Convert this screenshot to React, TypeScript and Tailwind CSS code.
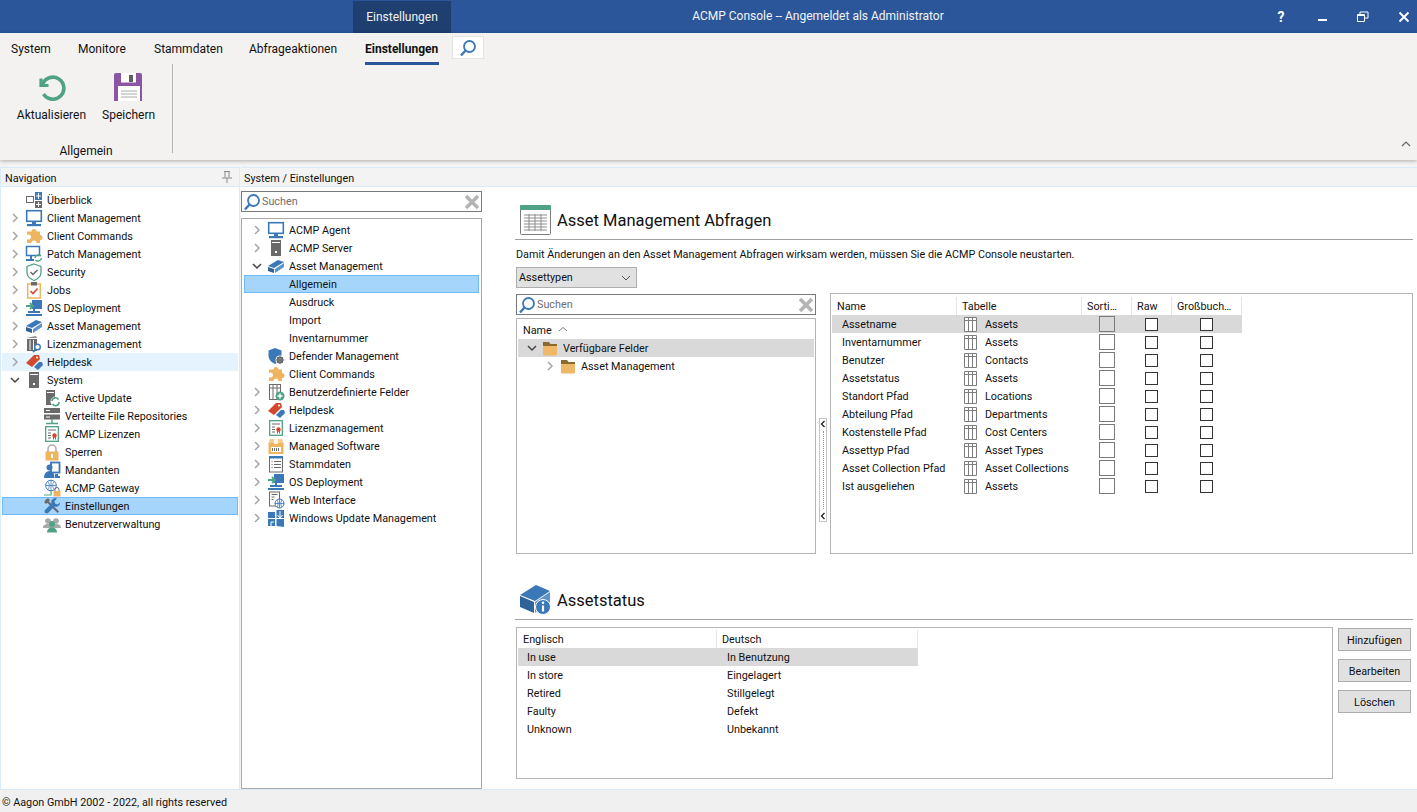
import type { ReactNode } from "react";

const BLUE = "#3b78b8";
const ORANGE = "#eeb45f";
const GREEN = "#4fa384";
const RED = "#d14a2e";
const GRAY = "#6a6a6a";

function Svg({ size = 18, children }: { size?: number; children: ReactNode }) {
  return (
    <svg width={size} height={size} viewBox="0 0 18 18" className="shrink-0">
      {children}
    </svg>
  );
}

const ICONS: Record<string, ReactNode> = {
  overview: (
    <>
      <rect x="1.500" y="5.500" width="7" height="6" fill="none" stroke={GRAY} />
      <rect x="10" y="1" width="7" height="8" fill={BLUE} />
      <rect x="10" y="10" width="7" height="7" fill={GRAY} />
      <path d="M11 5h5M13.500 2v6M11 13.500h5M13.500 11v5" stroke="#fff" />
    </>
  ),
  monitor: (
    <>
      <rect x="1.700" y="1.700" width="14.600" height="10.600" fill="#fff" stroke={BLUE} strokeWidth="1.600" />
      <rect x="7" y="13" width="4" height="2" fill={BLUE} />
      <rect x="2" y="15" width="14" height="2.200" fill={BLUE} />
    </>
  ),
  puzzle: (
    <path
      d="M6.500 4.500a2.500 2.500 0 1 1 5 0H15v3.500a2.500 2.500 0 1 1 0 5v3H11.500a2.500 2.500 0 1 0-5 0H2v-4a2.500 2.500 0 1 0 0-4V4.500z"
      fill={ORANGE}
    />
  ),
  monitorSync: (
    <>
      <rect x="1.500" y="1.500" width="13" height="9" fill="#fff" stroke={BLUE} strokeWidth="1.500" />
      <path d="M1 15h8M6 11v4" stroke={BLUE} strokeWidth="2" />
      <path d="M10 13a3.500 3.500 0 0 1 6-2M16.500 13a3.500 3.500 0 0 1-6 2" fill="none" stroke={GREEN} strokeWidth="1.500" />
    </>
  ),
  shield: (
    <>
      <path d="M9 1l7 2.500v6c0 4-3.500 6.500-7 8-3.500-1.500-7-4-7-8v-6z" fill="#fff" stroke={GREEN} strokeWidth="1.300" />
      <path d="M5.500 9l2.500 2.500 4.500-4.500" fill="none" stroke={GRAY} strokeWidth="1.500" />
    </>
  ),
  clipboard: (
    <>
      <rect x="2.700" y="3" width="12.600" height="14" fill="#fff" stroke={ORANGE} strokeWidth="1.500" />
      <rect x="6" y="1" width="6" height="3.500" fill={GRAY} />
      <path d="M5.500 10l2.500 2.500 4.500-5" fill="none" stroke={RED} strokeWidth="1.600" />
    </>
  ),
  deploy: (
    <>
      <rect x="7" y="1" width="10" height="9" fill={BLUE} />
      <rect x="3" y="12" width="12" height="2" fill={BLUE} />
      <path d="M9 10v3M1 16h16" stroke={BLUE} strokeWidth="2" />
      <path d="M1 7h6M5 4l3 3-3 3" fill="none" stroke={GREEN} strokeWidth="1.800" />
    </>
  ),
  box: (
    <>
      <path d="M1 9l10-6 6 2-10 6z" fill={BLUE} />
      <path d="M1 10l6 2v4l-6-2z" fill="#2f6299" />
      <path d="M8 12l9-6v4l-9 6z" fill="#5b93cb" />
    </>
  ),
  license: (
    <>
      <path d="M2 4h10v12H2z" fill={GRAY} />
      <path d="M1 3l10-2 1 2H1z" fill="#8a8a8a" />
      <path d="M5 5v10M8.500 5v10" stroke="#fff" />
      <circle cx="12.500" cy="12" r="2.800" fill="#fff" stroke={BLUE} strokeWidth="1.400" />
      <path d="M10.500 14.500l-2.500 2.500" stroke={BLUE} strokeWidth="1.800" />
    </>
  ),
  tag: (
    <>
      <path d="M1 10l8-8h5l1 4-8 8z" fill={RED} />
      <circle cx="12" cy="4.500" r="1" fill="#fff" />
      <path d="M9 14l5-5h3l1 3-5 5z" fill={BLUE} />
    </>
  ),
  server: (
    <>
      <rect x="4" y="1" width="10" height="16" fill={GRAY} />
      <path d="M5 3.500h8" stroke="#fff" />
      <rect x="8" y="12" width="2" height="2" fill="#fff" />
    </>
  ),
  serverSync: (
    <>
      <rect x="3" y="1" width="9" height="15" fill={GRAY} />
      <path d="M4 3.500h7" stroke="#fff" />
      <circle cx="12.500" cy="12.500" r="5" fill="#fff" />
      <path d="M9 12a3.500 3.500 0 0 1 6.500-1.500M16 13a3.500 3.500 0 0 1-6.500 2" fill="none" stroke={GREEN} strokeWidth="1.600" />
    </>
  ),
  repos: (
    <>
      <rect x="1" y="1" width="16" height="5" fill={GRAY} />
      <rect x="1" y="7.500" width="16" height="5" fill={GRAY} />
      <path d="M3 3.500h4M3 10h4" stroke="#fff" />
      <path d="M9 12v4M3 16.500h12" stroke={GREEN} strokeWidth="1.400" />
    </>
  ),
  cert: (
    <>
      <rect x="2.700" y="1.700" width="12.600" height="14.600" fill="#fff" stroke={GREEN} strokeWidth="1.300" />
      <path d="M5 5h8M5 8h3M5 10.500h3M5 13h3" stroke={GRAY} />
      <circle cx="11.500" cy="10.500" r="2.200" fill={RED} />
      <path d="M10.500 12v2.500M12.500 12v2.500" stroke={RED} />
    </>
  ),
  lock: (
    <>
      <path d="M5 9V6a4 4 0 0 1 8 0v3" fill="none" stroke="#a8a8a8" strokeWidth="1.500" />
      <rect x="2.500" y="8.500" width="13" height="9" fill={ORANGE} />
      <rect x="8" y="11" width="2" height="4" fill="#fff" />
    </>
  ),
  mandanten: (
    <>
      <rect x="8" y="1.500" width="8.500" height="10" fill="#fff" stroke={BLUE} strokeWidth="1.800" />
      <circle cx="6.500" cy="6.500" r="3" fill={BLUE} />
      <path d="M1 17c0-4 2-7 5.500-7s5 3 5 7z" fill={BLUE} />
      <path d="M12 13h3v2h2v2h-5z" fill={BLUE} />
    </>
  ),
  gateway: (
    <>
      <circle cx="8" cy="6.500" r="5.300" fill="#fff" stroke={BLUE} />
      <path d="M2.700 6.500h10.600M8 1.200v10.600M4.800 2.500c2 2.500 2 5.500 0 8M11.200 2.500c-2 2.500-2 5.500 0 8" fill="none" stroke={BLUE} strokeWidth=".8" />
      <path d="M8 12v4H1" stroke={GREEN} fill="none" strokeWidth="1.200" />
      <rect x="10.500" y="12" width="7" height="5.500" fill={ORANGE} />
      <path d="M12 12v-1.500a2 2 0 0 1 4 0V12" fill="none" stroke={GRAY} />
    </>
  ),
  tools: (
    <>
      <path d="M2 3.500L3.500 2 16 14.500 14.500 16z" fill={GRAY} />
      <path d="M1 5l4-4 2 2-4 4z" fill={GRAY} />
      <path d="M12.500 1a4 4 0 0 0-4 5.500L1.500 13.500 2 16l2.500.500L11.500 9.500a4 4 0 0 0 5.500-4l-2.500 2-2.500-1-.5-2.500 2.500-2.500z" fill={BLUE} />
    </>
  ),
  users: (
    <>
      <circle cx="5" cy="6" r="2.800" fill="#a8a8a8" />
      <circle cx="13" cy="6" r="2.800" fill="#a8a8a8" />
      <path d="M0 13c0-3 2-4 5-4s5 1 5 4zM8 13c0-3 2-4 5-4s5 1 5 4z" fill="#a8a8a8" />
      <circle cx="9" cy="9" r="3" fill={GREEN} />
      <path d="M4 17.500c0-3 2-5 5-5s5 2 5 5z" fill={GREEN} />
    </>
  ),
  defender: (
    <>
      <path d="M8 1l6.500 2.500v5c0 4-3 7-6.500 8.500-3.500-1.500-6.500-4.500-6.500-8.500v-5z" fill={BLUE} />
      <circle cx="13" cy="13" r="4.500" fill="#fff" />
      <circle cx="13" cy="13" r="2.400" fill="none" stroke={GRAY} strokeWidth="2" />
      <path d="M13 8.800v8.400M8.800 13h8.400M10 10l6 6M16 10l-6 6" stroke={GRAY} strokeWidth=".9" />
    </>
  ),
  tableAdd: (
    <>
      <rect x="2.500" y="1.500" width="11" height="15" fill="#fff" stroke={GRAY} />
      <path d="M2.500 5h11M6 1.500v15M10 1.500v15" stroke={GRAY} />
      <circle cx="13" cy="13" r="4.500" fill={GREEN} />
      <path d="M10.500 13h5M13 10.500v5" stroke="#fff" strokeWidth="1.500" />
    </>
  ),
  pack: (
    <>
      <path d="M1.500 6h15v11h-15z" fill={ORANGE} />
      <path d="M3 2h12l1.500 4h-15z" fill="#f4cd92" />
      <rect x="7" y="2" width="4" height="5" fill="#fff3df" />
      <rect x="4" y="10" width="10" height="5" fill="#fff" />
      <path d="M5.500 11v3M7.500 11v3M9.500 11v3M11.500 11v3" stroke={GRAY} />
    </>
  ),
  list: (
    <>
      <rect x="2.500" y="1.500" width="13" height="15.500" fill="#fff" stroke={GRAY} />
      <rect x="2" y="1" width="14" height="2.500" fill={BLUE} />
      <path d="M4.500 6.500h1M7 6.500h7M4.500 9.500h1M7 9.500h7M4.500 12.500h1M7 12.500h7" stroke={GRAY} />
    </>
  ),
  web: (
    <>
      <rect x="2.500" y="1" width="10" height="14" fill="#fff" stroke={GRAY} />
      <path d="M4.500 3.500h6M4.500 6h3M4.500 8.500h2" stroke={GRAY} />
      <circle cx="12.500" cy="12.500" r="4.500" fill="#fff" stroke={BLUE} />
      <path d="M8 12.500h9M12.500 8v9M10 9c1.500 2 1.500 5 0 7M15 9c-1.500 2-1.500 5 0 7" fill="none" stroke={BLUE} strokeWidth=".8" />
    </>
  ),
  windows: (
    <>
      <rect x="1" y="3" width="7" height="6" fill={BLUE} />
      <rect x="9.500" y="1" width="7.500" height="8" fill={BLUE} />
      <path d="M1 10h7v7H1z" fill={BLUE} />
      <path d="M9.500 10H17v8l-7.500-1z" fill={BLUE} />
      <path d="M13 2v6M10.500 6l2.500 3 2.500-3M4 17v-4h3" stroke="#fff" fill="none" />
    </>
  ),
};

function Chevron({ state }: { state?: "open" | "closed" }) {
  if (!state) return <span className="w-[23px] shrink-0" />;
  return (
    <span className="w-[23px] shrink-0 pl-[8px]">
      <svg width="10" height="10" viewBox="0 0 10 10" className="block">
        {state === "open" ? (
          <path d="M1 3l4 4 4-4" fill="none" stroke="#444" strokeWidth="1.500" />
        ) : (
          <path d="M3 1l4 4-4 4" fill="none" stroke="#a6a6a6" strokeWidth="1.500" />
        )}
      </svg>
    </span>
  );
}

type Node = {
  label: string;
  icon?: string;
  state?: "open" | "closed";
  child?: boolean;
  selected?: boolean;
  hover?: boolean;
};

const NAV: Node[] = [
  { label: "Überblick", icon: "overview" },
  { label: "Client Management", icon: "monitor", state: "closed" },
  { label: "Client Commands", icon: "puzzle", state: "closed" },
  { label: "Patch Management", icon: "monitorSync", state: "closed" },
  { label: "Security", icon: "shield", state: "closed" },
  { label: "Jobs", icon: "clipboard", state: "closed" },
  { label: "OS Deployment", icon: "deploy", state: "closed" },
  { label: "Asset Management", icon: "box", state: "closed" },
  { label: "Lizenzmanagement", icon: "license", state: "closed" },
  { label: "Helpdesk", icon: "tag", state: "closed", hover: true },
  { label: "System", icon: "server", state: "open" },
  { label: "Active Update", icon: "serverSync", child: true },
  { label: "Verteilte File Repositories", icon: "repos", child: true },
  { label: "ACMP Lizenzen", icon: "cert", child: true },
  { label: "Sperren", icon: "lock", child: true },
  { label: "Mandanten", icon: "mandanten", child: true },
  { label: "ACMP Gateway", icon: "gateway", child: true },
  { label: "Einstellungen", icon: "tools", child: true, selected: true },
  { label: "Benutzerverwaltung", icon: "users", child: true },
];

const SETTINGS: Node[] = [
  { label: "ACMP Agent", icon: "monitor", state: "closed" },
  { label: "ACMP Server", icon: "server", state: "closed" },
  { label: "Asset Management", icon: "box", state: "open" },
  { label: "Allgemein", child: true, selected: true },
  { label: "Ausdruck", child: true },
  { label: "Import", child: true },
  { label: "Inventarnummer", child: true },
  { label: "Defender Management", icon: "defender" },
  { label: "Client Commands", icon: "puzzle" },
  { label: "Benutzerdefinierte Felder", icon: "tableAdd", state: "closed" },
  { label: "Helpdesk", icon: "tag", state: "closed" },
  { label: "Lizenzmanagement", icon: "cert", state: "closed" },
  { label: "Managed Software", icon: "pack", state: "closed" },
  { label: "Stammdaten", icon: "list", state: "closed" },
  { label: "OS Deployment", icon: "deploy", state: "closed" },
  { label: "Web Interface", icon: "web", state: "closed" },
  { label: "Windows Update Management", icon: "windows", state: "closed" },
];

function TreeRow({ node }: { node: Node }) {
  const bg = node.selected
    ? "bg-[#a6d5fb] outline outline-1 -outline-offset-1 outline-[#6fbaf7]"
    : node.hover
      ? "bg-[#e5f3ff]"
      : "";
  return (
    <div className={`flex h-[18px] items-center ${bg}`}>
      {node.child ? <span className={node.icon ? "w-[41px] shrink-0" : "w-[45px] shrink-0"} /> : <Chevron state={node.state} />}
      {node.icon && <Svg>{ICONS[node.icon]}</Svg>}
      {node.icon && <span className="w-[4px] shrink-0" />}
      <span className="whitespace-nowrap pt-[2px] leading-[16px]">{node.label}</span>
    </div>
  );
}

function SearchIcon({ size = 18 }: { size?: number }) {
  return (
    <Svg size={size}>
      <circle cx="10.500" cy="7.500" r="5.500" fill="#fff" stroke={BLUE} strokeWidth="1.800" />
      <path d="M6.500 11.500L2 16.500" stroke={BLUE} strokeWidth="2.400" />
    </Svg>
  );
}

function SearchBox({ className }: { className: string }) {
  return (
    <div className={`flex h-[21px] items-center border border-[#7a7a7a] bg-white pl-[1px] pr-[1px] ${className}`}>
      <SearchIcon />
      <span className="ml-[1px] flex-1 text-[#6d6d6d]">Suchen</span>
      <svg width="16" height="16" viewBox="0 0 16 16" className="shrink-0">
        <path d="M2 2l12 12M14 2L2 14" stroke="#b4b4b4" strokeWidth="3.600" />
      </svg>
    </div>
  );
}

function ColIcon() {
  return (
    <svg width="14" height="15" viewBox="0 0 14 15" className="shrink-0">
      <path d="M.5.500h12v14H.5zM.5 3.500h12M4.500.500v14M8.500.500v14" fill="#fff" stroke="#7d7d7d" />
    </svg>
  );
}

const FIELDS = [
  ["Assetname", "Assets"],
  ["Inventarnummer", "Assets"],
  ["Benutzer", "Contacts"],
  ["Assetstatus", "Assets"],
  ["Standort Pfad", "Locations"],
  ["Abteilung Pfad", "Departments"],
  ["Kostenstelle Pfad", "Cost Centers"],
  ["Assettyp Pfad", "Asset Types"],
  ["Asset Collection Pfad", "Asset Collections"],
  ["Ist ausgeliehen", "Assets"],
];

const STATUS = [
  ["In use", "In Benutzung"],
  ["In store", "Eingelagert"],
  ["Retired", "Stillgelegt"],
  ["Faulty", "Defekt"],
  ["Unknown", "Unbekannt"],
];

function Folder() {
  return (
    <svg width="16" height="15" viewBox="0 0 16 15" className="shrink-0">
      <path d="M1 1h6l1.500 2H15v2H1z" fill="#8a6a2f" />
      <rect x="1" y="5" width="14" height="9.500" rx="1" fill="#eeb866" />
    </svg>
  );
}

function HeaderCell({ className, children }: { className: string; children: ReactNode }) {
  return <div className={`h-[18px] whitespace-nowrap border-r border-[#e5e5e5] pl-[5px] pt-[2px] leading-[16px] ${className}`}>{children}</div>;
}

function Heading({ icon, title }: { icon: ReactNode; title: string }) {
  return (
    <div className="flex h-[38px] items-center border-b border-[#a0a0a0] pb-[2px]">
      <span className="flex w-[42px] justify-start pl-[5px]">{icon}</span>
      <span className="pt-[2px] text-[16.500px] text-[#111]">{title}</span>
    </div>
  );
}

function Btn({ label }: { label: string }) {
  return (
    <div className="flex h-[23px] w-[73px] items-center justify-center border border-[#adadad] bg-[#e1e1e1] pt-[2px]">{label}</div>
  );
}

export default function App() {
  return (
    <div className="flex h-[812px] w-[1417px] flex-col overflow-hidden bg-white text-[10.800px] leading-[18px] text-[#111] font-['Roboto',sans-serif]">
      {/* title bar */}
      <div className="flex h-[33px] shrink-0 items-end bg-[#2b579a] pl-[353px] text-[12px] text-white">
        <div className="flex h-[32px] w-[98px] items-center justify-center bg-[#1e3f6f] text-[#f1f1f1]">Einstellungen</div>
        <div className="flex h-full flex-1 items-center justify-center pb-[1px] text-[#f3f3f3]">{"ACMP Console -\u200c- Angemeldet als Administrator"}</div>
        <div className="flex h-full w-[232px] items-center">
          <span className="ml-[89px] w-[14px] text-center text-[14px] font-bold">?</span>
          <svg width="12" height="12" viewBox="0 0 12 12" className="ml-[28px]">
            <path d="M2 9h9" stroke="#fff" strokeWidth="2" />
          </svg>
          <svg width="12" height="12" viewBox="0 0 12 12" className="ml-[29px]">
            <path d="M.500 3.500h7v7h-7zM.500 4.500h7M3 3V1h8v6H8" fill="none" stroke="#fff" />
          </svg>
          <svg width="12" height="12" viewBox="0 0 12 12" className="ml-[29px]">
            <path d="M1.500 1.500l9 9M10.500 1.500l-9 9" stroke="#fff" strokeWidth="1.800" />
          </svg>
        </div>
      </div>

      {/* ribbon */}
      <div className="relative z-10 h-[127px] shrink-0 bg-[#f3f2f1] text-[12px] shadow-[0_1px_4px_rgba(0,0,0,0.3)]">
        <div className="flex h-[31px] items-start pt-[3px]">
          <span className="ml-[11px] mt-[4px] w-[38px]">System</span>
          <span className="ml-[29px] mt-[4px] w-[49px]">Monitore</span>
          <span className="ml-[27px] mt-[4px] w-[68px]">Stammdaten</span>
          <span className="ml-[27px] mt-[4px] w-[88px]">Abfrageaktionen</span>
          <span className="ml-[28px] mt-[4px] h-[25px] w-[74px] whitespace-nowrap border-b-[3px] border-[#2b579a] font-bold">Einstellungen</span>
          <span className="ml-[13px] flex h-[23px] w-[32px] items-center justify-center border border-[#e3e3e3] bg-white">
            <SearchIcon size={18} />
          </span>
        </div>
        <div className="flex h-[89px] items-stretch">
          <div className="flex w-[172px] flex-col items-center">
            <div className="flex flex-1 items-start gap-[16px] pt-[8px]">
              <div className="flex flex-col items-center">
                <svg width="30" height="30" viewBox="0 0 30 30">
                  <path d="M5 6.500v7h7.500" fill="none" stroke="#4fa384" strokeWidth="3.200" />
                  <path d="M6.500 12.500a11 11 0 1 1 1 9.500" fill="none" stroke="#4fa384" strokeWidth="3.600" />
                </svg>
                <span className="mt-[4px]">Aktualisieren</span>
              </div>
              <div className="flex flex-col items-center">
                <svg width="30" height="30" viewBox="0 0 30 30" className="-translate-x-[1px]">
                  <path d="M1 3a2 2 0 0 1 2-2h24a2 2 0 0 1 2 2v26H1z" fill="#8c55a3" />
                  <rect x="8" y="1" width="15" height="9.500" fill="#fff" />
                  <rect x="16" y="3" width="4" height="7" fill="#5e5e5e" />
                  <rect x="5" y="14" width="22" height="15" fill="#fff" />
                  <path d="M8 19h16M8 22h16M8 25h16" stroke="#aaa" />
                </svg>
                <span className="mt-[4px]">Speichern</span>
              </div>
            </div>
            <span className="mb-[-7px]">Allgemein</span>
          </div>
          <div className="w-[1px] bg-[#b5b5b5]" />
          <div className="flex flex-1 items-end justify-end pb-[5px] pr-[6px]">
            <svg width="10" height="8" viewBox="0 0 10 8">
              <path d="M1 6l4-4 4 4" fill="none" stroke="#666" strokeWidth="1.200" />
            </svg>
          </div>
        </div>
      </div>

      {/* body */}
      <div className="flex min-h-0 flex-1 gap-[1px] bg-[#f4f4f4] pt-[7px]">
        {/* navigation */}
        <div className="flex w-[240px] shrink-0 flex-col bg-white">
          <div className="flex h-[20px] shrink-0 items-center justify-between border border-[#d9ebf9] bg-[#f3f3f3] pl-[4px] pr-[6px]">
            <span className="pt-[4px] leading-[16px]">Navigation</span>
            <svg width="12" height="14" viewBox="0 0 12 14">
              <path d="M3 1.500h6M4 1.500v6M8 1.500v6M1 8h10M6 8v5" fill="none" stroke="#8a8a8a" />
            </svg>
          </div>
          <div className="flex-1 border-x border-[#d9ebf9] pl-[1px] pr-[1px] pt-[4px]">
            {NAV.map((n) => (
              <TreeRow key={n.label} node={n} />
            ))}
          </div>
        </div>

        {/* content */}
        <div className="flex min-w-0 flex-1 flex-col bg-white">
          <div className="flex h-[20px] shrink-0 items-center border-y border-[#d9ebf9] bg-[#f3f3f3] pl-[3px] pt-[4px]">System / Einstellungen</div>
          <div className="flex min-h-0 flex-1">
            {/* settings tree */}
            <div className="flex w-[241px] shrink-0 flex-col pt-[4px]">
              <SearchBox className="shrink-0" />
              <div className="mt-[6px] flex-1 border border-[#a9a9a9] px-[2px] pt-[2px]">
                {SETTINGS.map((n) => (
                  <TreeRow key={n.label} node={n} />
                ))}
              </div>
            </div>

            {/* right side */}
            <div className="ml-[33px] flex w-[898px] shrink-0 flex-col pt-[15px]">
              <Heading
                title="Asset Management Abfragen"
                icon={
                  <svg width="31" height="30" viewBox="0 0 31 30">
                    <rect x=".500" y=".500" width="30" height="29" rx="1" fill="#fff" stroke="#7d7d7d" />
                    <rect x="0" y="0" width="31" height="5" rx="1" fill="#4fa384" />
                    <path d="M4 10h23M4 13h23M4 16h23M4 19h23M4 22h23M4 25h23M9 9v17M15 9v17M21 9v17" stroke="#8c8c8c" />
                  </svg>
                }
              />
              <div className="ml-[1px] mt-[6px]">Damit Änderungen an den Asset Management Abfragen wirksam werden, müssen Sie die ACMP Console neustarten.</div>
              <div className="ml-[1px] mt-[3px] flex h-[21px] w-[121px] items-center justify-between border border-[#adadad] bg-[#e1e1e1] pl-[2px] pr-[5px]">
                <span>Assettypen</span>
                <svg width="10" height="10" viewBox="0 0 10 10">
                  <path d="M1 3l4 4 4-4" fill="none" stroke="#555" />
                </svg>
              </div>

              <div className="mt-[5px] flex h-[261px]">
                <div className="ml-[1px] flex w-[300px] shrink-0 flex-col pt-[1px]">
                  <SearchBox className="shrink-0" />
                  <div className="mt-[3px] flex-1 border border-[#b5b5b5] px-[1px] pt-[2px]">
                    <div className="flex h-[18px] items-center pl-[5px]">
                      <span className="pt-[2px] leading-[16px]">Name</span>
                      <svg width="10" height="10" viewBox="0 0 10 10" className="ml-[6px]">
                        <path d="M1 6l4-3.500L9 6" fill="none" stroke="#777" />
                      </svg>
                    </div>
                    <div className="flex h-[18px] items-center bg-[#d9d9d9] pl-[9px]">
                      <svg width="10" height="10" viewBox="0 0 10 10" className="mr-[5px]">
                        <path d="M1 3l4 4 4-4" fill="none" stroke="#444" strokeWidth="1.500" />
                      </svg>
                      <Folder />
                      <span className="ml-[5px] pt-[2px] leading-[16px]">Verfügbare Felder</span>
                    </div>
                    <div className="flex h-[18px] items-center pl-[27px]">
                      <svg width="10" height="10" viewBox="0 0 10 10" className="mr-[5px]">
                        <path d="M3 1l4 4-4 4" fill="none" stroke="#a6a6a6" strokeWidth="1.500" />
                      </svg>
                      <Folder />
                      <span className="ml-[5px] pt-[2px] leading-[16px]">Asset Management</span>
                    </div>
                  </div>
                </div>

                <div className="ml-[3px] mt-[125px] flex h-[104px] w-[8px] shrink-0 flex-col justify-between border border-[#c4c4c4]">
                  <svg width="6" height="10" viewBox="0 0 6 10">
                    <path d="M4.500 2L1.500 5l3 3" fill="none" stroke="#222" strokeWidth="1.300" />
                  </svg>
                  <div className="mx-auto h-[78px] w-0 border-l border-dotted border-[#5aa0d8]" />
                  <svg width="6" height="10" viewBox="0 0 6 10">
                    <path d="M4.500 2L1.500 5l3 3" fill="none" stroke="#222" strokeWidth="1.300" />
                  </svg>
                </div>

                <div className="ml-[3px] flex-1 border border-[#b5b5b5] pl-[1px] pt-[3px]">
                  <div className="flex w-[410px]">
                    <HeaderCell className="w-[125px]">Name</HeaderCell>
                    <HeaderCell className="w-[125px]">Tabelle</HeaderCell>
                    <HeaderCell className="w-[50px]">Sorti…</HeaderCell>
                    <HeaderCell className="w-[40px]">Raw</HeaderCell>
                    <HeaderCell className="w-[70px]">Großbuch…</HeaderCell>
                  </div>
                  {FIELDS.map(([name, table], i) => (
                    <div key={name} className={`flex h-[18px] w-[410px] items-center ${i === 0 ? "bg-[#d9d9d9]" : ""}`}>
                      <span className="w-[125px] pl-[10px] pt-[2px] leading-[16px]">{name}</span>
                      <span className="flex w-[125px] items-center pl-[7px]">
                        <ColIcon />
                        <span className="ml-[7px] pt-[2px] leading-[16px]">{table}</span>
                      </span>
                      <span className="flex w-[50px] justify-center">
                        <span className={`h-[16px] w-[16px] border border-[#7a7a7a] ${i === 0 ? "bg-[#d9d9d9]" : "bg-white"}`} />
                      </span>
                      <span className="flex w-[38px] justify-center">
                        <span className="h-[13px] w-[13px] border border-[#333] bg-white" />
                      </span>
                      <span className="flex w-[72px] justify-center">
                        <span className="h-[13px] w-[13px] border border-[#333] bg-white" />
                      </span>
                    </div>
                  ))}
                </div>
              </div>

              <div className="mt-[28px]">
                <Heading
                  title="Assetstatus"
                  icon={
                    <svg width="32" height="31" viewBox="0 0 32 31" className="-ml-[1px]">
                      <path d="M1 11L17 1l14 6-15 10z" fill="#3b78b8" />
                      <path d="M1 12l14 6v11L1 23z" fill="#2f6299" />
                      <path d="M16 18l15-10v10L16 29z" fill="#5b93cb" />
                      <circle cx="24" cy="23" r="7.500" fill="#3b78b8" stroke="#fff" />
                      <path d="M24 21.500v6" stroke="#fff" strokeWidth="2.200" />
                      <circle cx="24" cy="18.800" r="1.300" fill="#fff" />
                    </svg>
                  }
                />
              </div>
              <div className="mt-[7px] flex">
                <div className="ml-[1px] h-[152px] w-[817px] shrink-0 border border-[#b5b5b5] pl-[1px] pt-[2px]">
                  <div className="flex w-[400px]">
                    <HeaderCell className="w-[199px]">Englisch</HeaderCell>
                    <HeaderCell className="w-[201px]">Deutsch</HeaderCell>
                  </div>
                  {STATUS.map(([en, de], i) => (
                    <div key={en} className={`flex h-[18px] w-[400px] items-center ${i === 0 ? "bg-[#d9d9d9]" : ""}`}>
                      <span className="w-[199px] pl-[9px] pt-[2px] leading-[16px]">{en}</span>
                      <span className="pl-[10px] pt-[2px] leading-[16px]">{de}</span>
                    </div>
                  ))}
                </div>
                <div className="ml-[5px] mt-[1px] flex flex-col gap-[8px]">
                  <Btn label="Hinzufügen" />
                  <Btn label="Bearbeiten" />
                  <Btn label="Löschen" />
                </div>
              </div>
            </div>
          </div>
        </div>
      </div>

      {/* status bar */}
      <div className="flex h-[23px] shrink-0 items-center border-t border-[#d9ebf9] bg-[#f0f0f0] pl-[2px] pt-[4px]">© Aagon GmbH 2002 - 2022, all rights reserved</div>
    </div>
  );
}
